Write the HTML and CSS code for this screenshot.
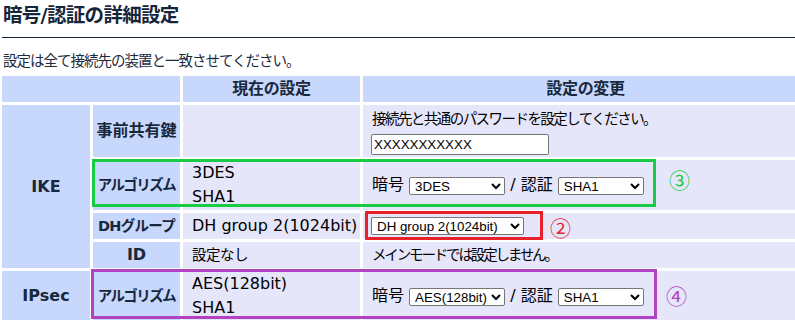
FILE: index.html
```html
<html>
  <head>
    <meta charset="utf-8" />
    <meta name="viewport" content="width=device-width, initial-scale=1" />
    <link rel="stylesheet" href="styles.css">
  </head>
  <body>
    <div class="page">
      <h1 class="title">暗号/認証の詳細設定</h1>
      <p class="lead">設定は全て接続先の装置と一致させてください。</p>

      <table class="settings">
        <colgroup>
          <col class="c-sec" />
          <col class="c-item" />
          <col class="c-now" />
          <col class="c-new" />
        </colgroup>
        <tr class="head">
          <th colspan="2"></th>
          <th>現在の設定</th>
          <th>設定の変更</th>
        </tr>
        <tr class="row-psk">
          <th rowspan="4" class="sec">IKE</th>
          <th class="item">事前共有鍵</th>
          <td></td>
          <td>
            <span class="note note-pass">接続先と共通のパスワードを設定してください。</span>
            <input class="pass" type="text" value="XXXXXXXXXXX" />
          </td>
        </tr>
        <tr>
          <th class="item item-kana">アルゴリズム</th>
          <td>3DES<br>SHA1</td>
          <td>
            暗号 <select class="sel-enc"><option>3DES</option></select>
            / 認証 <select class="sel-auth"><option>SHA1</option></select>
          </td>
        </tr>
        <tr>
          <th class="item item-dh">DHグループ</th>
          <td>DH group 2(1024bit)</td>
          <td><select class="sel-dh"><option>DH group 2(1024bit)</option></select></td>
        </tr>
        <tr>
          <th class="item">ID</th>
          <td><span class="note note-none">設定なし</span></td>
          <td><span class="note note-main">メインモードでは設定しません。</span></td>
        </tr>
        <tr>
          <th class="sec">IPsec</th>
          <th class="item item-kana">アルゴリズム</th>
          <td>AES(128bit)<br>SHA1</td>
          <td>
            暗号 <select class="sel-enc"><option>AES(128bit)</option></select>
            / 認証 <select class="sel-auth"><option>SHA1</option></select>
          </td>
        </tr>
      </table>

      <!-- annotation marks -->
      <div class="mark mark-ike"></div>
      <div class="mark mark-dh"></div>
      <div class="mark mark-ipsec"></div>
      <span class="num num-ike">③</span>
      <span class="num num-dh">②</span>
      <span class="num num-ipsec">④</span>
    </div>
  </body>
</html>
```

FILE: styles.css
```css
html, body {
  margin: 0;
  overflow: hidden;
  background: white;
}
.page {
  position: relative;
  width: 820px;
  padding-left: 2px;
  font-family: "DejaVu Sans", "Noto Sans CJK JP", sans-serif;
  font-size: 15.5px;
  color: #1c2a3c;
}
.title {
  margin: 0;
  padding: 0 0 5px 1px;
  font-size: 19.5px;
  line-height: 32px;
  font-weight: bold;
  letter-spacing: -0.7px;
  color: #16263a;
  border-bottom: 1px solid #16263a;
}
.lead {
  margin: 0;
  padding: 11px 0 0 1px;
  line-height: 24px;
  font-size: 14.5px;
  letter-spacing: -1px;
}

.settings {
  margin-left: -3px;
  border-spacing: 3px;
  table-layout: fixed;
  width: 812px;
}
.settings .c-sec { width: 88px; }
.settings .c-item { width: 87px; }
.settings .c-now { width: 177px; }
.settings th,
.settings td {
  padding: 1px 9px;
  line-height: 24px;
  white-space: nowrap;
}
.settings th {
  background: #c8d8fc;
  text-align: center;
  font-weight: bold;
  color: #17283c;
}
.settings .head th {
  font-size: 16px;
  letter-spacing: -0.3px;
}
.settings .item {
  padding: 1px 0;
  font-size: 16px;
}
.settings .item-kana {
  font-size: 14.5px;
  letter-spacing: -1.5px;
}
.settings .item-dh {
  font-size: 14.5px;
  letter-spacing: -0.7px;
}
.settings td {
  background: #e6e6fa;
  text-align: left;
}
.row-psk th,
.row-psk td {
  padding-top: 2px;
  padding-bottom: 2px;
}

/* japanese sentences: narrow kana like the original UI font */
.note {
  font-size: 14.5px;
}
.note-pass {
  letter-spacing: -1.55px;
}
.note-main {
  letter-spacing: -2.15px;
}
.note-none {
  letter-spacing: -0.5px;
}

.settings input,
.settings select {
  font-family: "Liberation Sans", Arial, sans-serif;
  font-size: 13.33px;
  letter-spacing: 0;
  color: #000;
  vertical-align: middle;
}
.pass {
  display: block;
  margin: 3px 0 0 -1px;
  width: 178px;
  height: 21px;
  padding: 0 2px;
  box-sizing: border-box;
  border: 1px solid #767676;
  border-radius: 2px;
}
.sel-enc,
.sel-auth,
.sel-dh {
  height: 18px;
  box-sizing: border-box;
  padding: 0 1px;
  border: 1px solid #767676;
  border-radius: 2px;
  background: white;
}
.sel-enc { width: 96px; }
.sel-auth { width: 86px; }
.sel-dh { width: 153px; margin-left: -1px; }

.mark {
  position: absolute;
  box-sizing: border-box;
  border: 3px solid;
}
.mark-ike {
  left: 92px;
  top: 159px;
  width: 564px;
  height: 48px;
  border-color: #19cc46;
}
.mark-dh {
  left: 365px;
  top: 211px;
  width: 178px;
  height: 29px;
  border-color: #e8202a;
}
.mark-ipsec {
  left: 91px;
  top: 269px;
  width: 566px;
  height: 50px;
  border-color: #b143c2;
}
.num {
  position: absolute;
  font-family: "Noto Sans CJK JP", sans-serif;
  font-size: 21px;
  line-height: 21px;
}
.num-ike { left: 669px; top: 169px; color: #19cc46; }
.num-dh { left: 550px; top: 217px; color: #e8202a; }
.num-ipsec { left: 666px; top: 285px; color: #b143c2; }
```
